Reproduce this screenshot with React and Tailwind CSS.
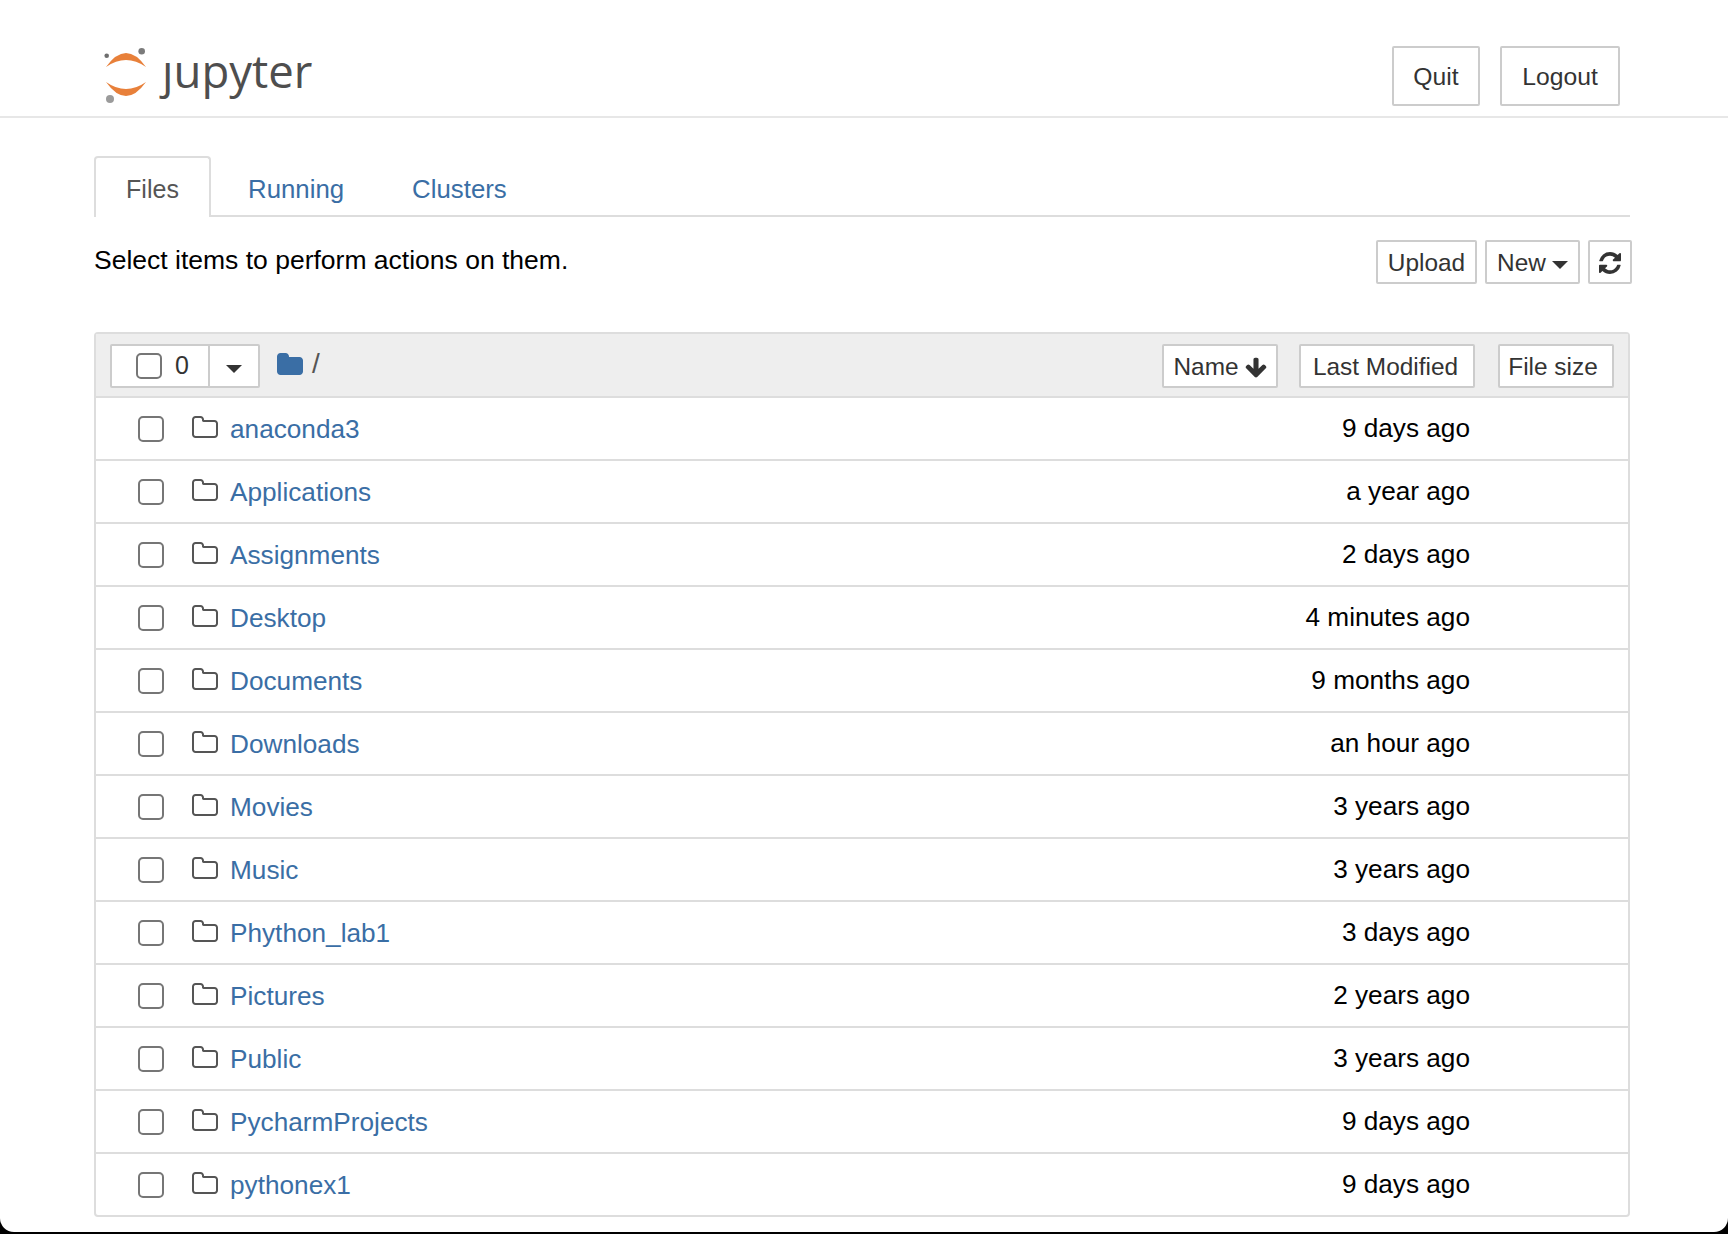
import React from 'react';

const FOLDER_OPEN = 'M1536 1312v-704q0-40-28-68t-68-28h-704q-40 0-68-28t-28-68v-64q0-40-28-68t-68-28h-320q-40 0-68 28t-28 68v960q0 40 28 68t68 28h1216q40 0 68-28t28-68zM1664 608v704q0 92-66 158t-158 66h-1216q-92 0-158-66t-66-158v-960q0-92 66-158t158-66h320q92 0 158 66t66 158v32h672q92 0 158 66t66 158z';
const FOLDER_SOLID = 'M1664 608v704q0 92-66 158t-158 66h-1216q-92 0-158-66t-66-158v-960q0-92 66-158t158-66h320q92 0 158 66t66 158v32h672q92 0 158 66t66 158z';
const REFRESH = 'M1511 928q0 5-1 7-64 268-268 434.500t-478 166.500q-146 0-282.500-55t-243.500-157l-129 129q-19 19-45 19t-45-19-19-45v-448q0-26 19-45t45-19h448q26 0 45 19t19 45-19 45l-137 137q71 66 161 102t187 36q134 0 250-65t186-179q11-17 53-117 8-23 30-23h192q13 0 22.500 9.500t9.500 22.500zM1536 128v448q0 26-19 45t-45 19h-448q-26 0-45-19t-19-45 19-45l138-138q-148-137-349-137-134 0-250 65t-186 179q-11 17-53 117-8 23-30 23h-199q-13 0-22.500-9.500t-9.500-22.500v-7q65-268 270-434.500t480-166.500q146 0 284 55.500t245 156.500l130-129q19-19 45-19t45 19 19 45z';
const ARROW_DOWN = 'M1611 704q0 53-37 90l-651 652q-39 37-91 37-53 0-90-37l-651-652q-38-36-38-90 0-53 38-91l74-75q39-37 91-37 53 0 90 37l294 294v-704q0-52 38-90t90-38h128q52 0 90 38t38 90v704l294-294q37-37 90-37 52 0 91 37l75 75q37 39 37 91z';

const files = [
  ['anaconda3', '9 days ago'],
  ['Applications', 'a year ago'],
  ['Assignments', '2 days ago'],
  ['Desktop', '4 minutes ago'],
  ['Documents', '9 months ago'],
  ['Downloads', 'an hour ago'],
  ['Movies', '3 years ago'],
  ['Music', '3 years ago'],
  ['Phython_lab1', '3 days ago'],
  ['Pictures', '2 years ago'],
  ['Public', '3 years ago'],
  ['PycharmProjects', '9 days ago'],
  ['pythonex1', '9 days ago'],
];

const Caret = () => (
  <span className="inline-block w-0 h-0 mt-[3px] border-x-[8px] border-x-transparent border-t-[8px] border-t-[#333]" />
);

const Checkbox = () => (
  <input type="checkbox" className="appearance-none w-[26px] h-[26px] shrink-0 bg-white rounded-[5px] border-2 border-[#767676]" />
);

const ToolButton = ({ className = '', children }) => (
  <button className={`flex items-center justify-center h-[44px] pt-[1px] bg-white border-2 border-[#ccc] rounded-[2px] text-[#333] text-[24.400px] ${className}`}>
    {children}
  </button>
);

function Logo() {
  return (
    <div className="flex items-start">
      <svg width="46" height="58" viewBox="0 0 46 58" className="shrink-0">
        <path d="M3 21Q23 -7 43 21Q23 7 3 21Z" fill="#e8803a" />
        <path d="M3 36Q23 64 43 36Q23 50 3 36Z" fill="#e8803a" />
        <circle cx="38.700" cy="5.300" r="3.300" fill="#7b7b7b" />
        <circle cx="3.700" cy="9.700" r="2.300" fill="#6e6e6e" />
        <circle cx="7" cy="53" r="4" fill="#9b9b9b" />
      </svg>
      <span className="ml-[13px] font-['Open_Sans',sans-serif] text-[45.500px] leading-[56px] text-[#4e4e4e] mt-[-4px]">ȷupyter</span>
    </div>
  );
}

function FileRow({ name, modified }) {
  return (
    <div className="flex items-center h-[63px] border-t-2 border-[#ddd] pl-[42px] pr-[158px]">
      <Checkbox />
      <svg width="26" height="24" viewBox="0 0 1664 1536" className="ml-[28px] shrink-0 -mt-[6px] fill-[#555]">
        <path d={FOLDER_OPEN} />
      </svg>
      <a href="#" className="ml-[12px] pt-[2px] text-[#3a6ea5]">{name}</a>
      <span className="ml-auto text-black">{modified}</span>
    </div>
  );
}

export default function App() {
  return (
    <div className="h-[1234px] bg-black overflow-hidden font-['Liberation_Sans',Arial,sans-serif]">
      <div className="h-[1232px] bg-white rounded-b-[14px] text-[26.200px]">
        <header className="flex items-start justify-between h-[118px] border-b-2 border-[#e7e7e7] pt-[46px] pl-[103px] pr-[108px]">
          <Logo />
          <div className="flex gap-[20px] text-[24.700px]">
            <button className="h-[60px] w-[88px] pt-[2px] border-2 border-[#ccc] rounded-[2px] text-[#333]">Quit</button>
            <button className="h-[60px] w-[120px] pt-[2px] border-2 border-[#ccc] rounded-[2px] text-[#333]">Logout</button>
          </div>
        </header>

        <main className="mx-[94px] w-[1536px]">
          <nav className="flex h-[61px] mt-[38px] border-b-2 border-[#ddd] text-[25.800px]">
            <div className="flex items-center justify-center w-[117px] h-[61px] pt-[4px] border-2 border-[#ddd] border-b-0 bg-white rounded-t-[4px] text-[#555] text-[25px]">Files</div>
            <a href="#" className="flex items-center pt-[8px] ml-[37px] text-[#3a6ea5]">Running</a>
            <a href="#" className="flex items-center pt-[8px] ml-[68px] text-[#3a6ea5]">Clusters</a>
          </nav>

          <div className="flex justify-between h-[114px] pt-[23px]">
            <p className="text-black text-[26.500px] leading-[40px]">Select items to perform actions on them.</p>
            <div className="flex gap-[8px] h-[44px] -mr-[2px]">
              <ToolButton className="w-[101px] pt-[2px]">Upload</ToolButton>
              <ToolButton className="w-[95px] gap-[6px] pt-[2px]">New <Caret /></ToolButton>
              <ToolButton className="w-[44px]">
                <svg width="22" height="22" viewBox="0 0 1536 1536" className="fill-[#333]"><path d={REFRESH} /></svg>
              </ToolButton>
            </div>
          </div>

          <section className="border-2 border-[#ddd] rounded-[4px] mt-[1px]">
            <div className="flex items-center h-[62px] bg-[#eee] px-[14px] pt-[2px]">
              <div className="flex h-[44px] bg-white border-2 border-[#ccc] rounded-[2px]">
                <div className="flex items-center w-[98px] pl-[24px] gap-[13px] border-r-2 border-[#ccc]">
                  <Checkbox />
                  <span className="text-[#333] text-[25px]">0</span>
                </div>
                <div className="flex items-center justify-center w-[48px] pt-[3px]"><Caret /></div>
              </div>
              <svg width="26" height="24" viewBox="0 0 1664 1536" className="ml-[17px] -mt-[6px] shrink-0 fill-[#3a6ea5]">
                <path d={FOLDER_SOLID} />
              </svg>
              <span className="ml-[9px] -mt-[4px] text-[#555] text-[28px]">/</span>
              <ToolButton className="ml-auto w-[116px] gap-[6px] pt-[3px]">
                Name
                <svg width="22" height="22" viewBox="0 0 1664 1536" className="fill-[#333]"><path d={ARROW_DOWN} /></svg>
              </ToolButton>
              <ToolButton className="ml-[21px] w-[176px] pt-[3px] pr-[3px]">Last Modified</ToolButton>
              <ToolButton className="ml-[23px] w-[116px] pt-[3px] pr-[6px] text-[23.800px]">File size</ToolButton>
            </div>
            {files.map(([name, modified]) => (
              <FileRow key={name} name={name} modified={modified} />
            ))}
          </section>
        </main>
      </div>
    </div>
  );
}
